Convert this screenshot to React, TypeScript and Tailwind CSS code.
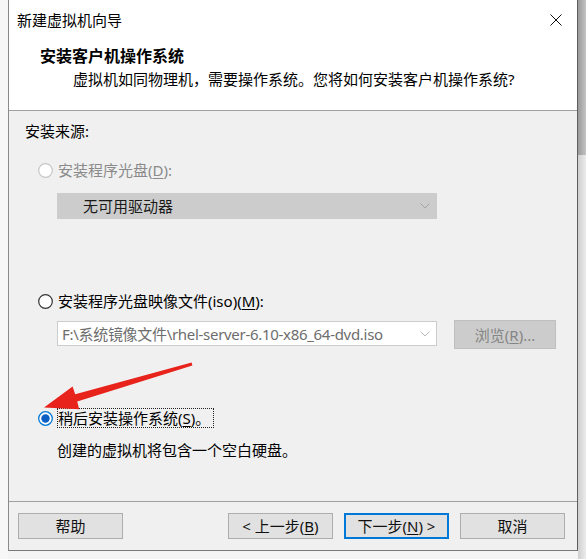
import React from "react";

const font = { fontFamily: '"Noto Sans", "Noto Sans CJK SC", sans-serif' };

function Radio({ state }: { state: "disabled" | "off" | "on" }) {
  if (state === "on") {
    return (
      <svg width="15" height="15" viewBox="0 0 15 15" className="shrink-0">
        <circle cx="7.5" cy="7.5" r="6.8" fill="#ffffff" stroke="#0078d7" strokeWidth="1.3" />
        <circle cx="7.5" cy="7.5" r="4.2" fill="#0a5fc4" />
      </svg>
    );
  }
  return (
    <svg width="15" height="15" viewBox="0 0 15 15" className="shrink-0">
      <circle
        cx="7.5"
        cy="7.5"
        r="6.8"
        fill="#ffffff"
        stroke={state === "disabled" ? "#c6c6c6" : "#333333"}
        strokeWidth="1.2"
      />
    </svg>
  );
}

function Chevron({ color }: { color: string }) {
  return (
    <svg width="10" height="6" viewBox="0 0 10 6">
      <path d="M0.5 0.5 L5 5 L9.5 0.5" fill="none" stroke={color} strokeWidth="1" />
    </svg>
  );
}

function Btn({ children, focus }: { children: React.ReactNode; focus?: boolean }) {
  return (
    <div
      className={
        "w-[105px] h-[26px] flex items-center justify-center text-[15px] leading-[20px] text-[#111] bg-[#e1e1e1] " +
        (focus ? "border-2 border-[#0078d7]" : "border border-[#adadad]")
      }
    >
      {children}
    </div>
  );
}

export default function App() {
  return (
    <div className="relative w-[586px] h-[559px] overflow-hidden bg-[#f4f4f4] flex" style={font}>
      {/* left outside */}
      <div className="w-[8px] h-full bg-[#f7f7f7]" />
      {/* window */}
      <div className="w-[570px] h-[551px] flex flex-col border-l border-r border-b border-l-[#8a8a8a] border-r-[#5e5e5e] border-b-[#7a7a7a] bg-[#f0f0f0]">
        {/* header white */}
        <div className="h-[110px] bg-white flex flex-col border-b border-[#a0a0a0] box-content">
          <div className="h-[40px] flex items-center justify-between pl-[8px] pr-[15px]">
            <span className="text-[15px] leading-[20px] text-black">新建虚拟机向导</span>
            <svg width="12" height="12" viewBox="0 0 12 12">
              <path d="M0.5 0.5 L11.5 11.5 M11.5 0.5 L0.5 11.5" stroke="#111" strokeWidth="1" />
            </svg>
          </div>
          <div className="mt-[6px] pl-[31px] text-[16px] leading-[20px] font-bold text-black">安装客户机操作系统</div>
          <div className="mt-[3px] pl-[64px] text-[15px] leading-[20px] text-black">
            虚拟机如同物理机，需要操作系统。您将如何安装客户机操作系统?
          </div>
        </div>

        {/* content */}
        <div className="h-[391px] flex flex-col border-b border-[#a0a0a0] pl-[29px] text-[15px] leading-[20px] text-black">
          <div className="mt-[10px] -ml-[13px]">安装来源:</div>

          <div className="mt-[19px] h-[20px] flex items-center">
            <Radio state="disabled" />
            <span className="ml-[5px] text-[#8a8a8a]">
              安装程序光盘(<u className="underline-offset-2">D</u>):
            </span>
          </div>

          <div className="mt-[13px] ml-[19px] w-[380px] h-[26px] bg-[#cccccc] flex items-center justify-between pl-[26px] pr-[7px]">
            <span className="text-[#1a1a1a]">无可用驱动器</span>
            <Chevron color="#a6a6a6" />
          </div>

          <div className="mt-[72px] h-[20px] flex items-center">
            <Radio state="off" />
            <span className="ml-[5px]">
              安装程序光盘映像文件(iso)(<u className="underline-offset-2">M</u>):
            </span>
          </div>

          <div className="mt-[9px] ml-[19px] flex items-start">
            <div className="mt-[1px] w-[380px] h-[25px] bg-white border border-[#cccccc] flex items-center justify-between pl-[4px] pr-[6px]">
              <span className="text-[#6d6d6d] text-[15px] tracking-[-0.3px] whitespace-nowrap">F:\系统镜像文件\rhel-server-6.10-x86_64-dvd.iso</span>
              <Chevron color="#b8b8b8" />
            </div>
            <div className="ml-[17px] w-[102px] h-[29px] bg-[#cccccc] border border-[#bfbfbf] flex items-center justify-center text-[#858585]">
              浏览(<u className="underline-offset-2">R</u>)...
            </div>
          </div>

          <div className="mt-[59px] h-[20px] flex items-center">
            <Radio state="on" />
            <span className="ml-[4px] h-[20px] border border-dotted border-[#222] pr-[3px] flex items-center">
              稍后安装操作系统(<u className="underline-offset-2">S</u>)。
            </span>
          </div>

          <div className="mt-[12px] ml-[19px]">创建的虚拟机将包含一个空白硬盘。</div>
        </div>

        {/* buttons */}
        <div className="flex-1 flex items-start pt-[11px] pl-[9px] pr-[12px]">
          <Btn>帮助</Btn>
          <div className="flex-1" />
          <div className="flex gap-[11px]">
            <Btn>
              &lt; 上一步(<u className="underline-offset-2">B</u>)
            </Btn>
            <Btn focus>
              下一步(<u className="underline-offset-2">N</u>) &gt;
            </Btn>
            <Btn>取消</Btn>
          </div>
        </div>
      </div>
      {/* right outside */}
      <div className="w-[8px] h-full flex flex-col">
        <div className="h-[155px] bg-gradient-to-r from-[#9a9a9a] to-[#c4c4c4]" />
        <div className="flex-1 bg-gradient-to-r from-[#cfcfcf] to-[#ececec]" />
      </div>

      {/* red arrow annotation */}
      <svg className="absolute left-0 top-0 pointer-events-none" width="586" height="559" viewBox="0 0 586 559">
        <polygon
          points="191.6,362.6 75.2,394.2 72.6,386.6 44,407.5 79.2,409.2 77.2,401.6 192.4,365.4"
          fill="#e8231c"
        />
      </svg>
    </div>
  );
}
